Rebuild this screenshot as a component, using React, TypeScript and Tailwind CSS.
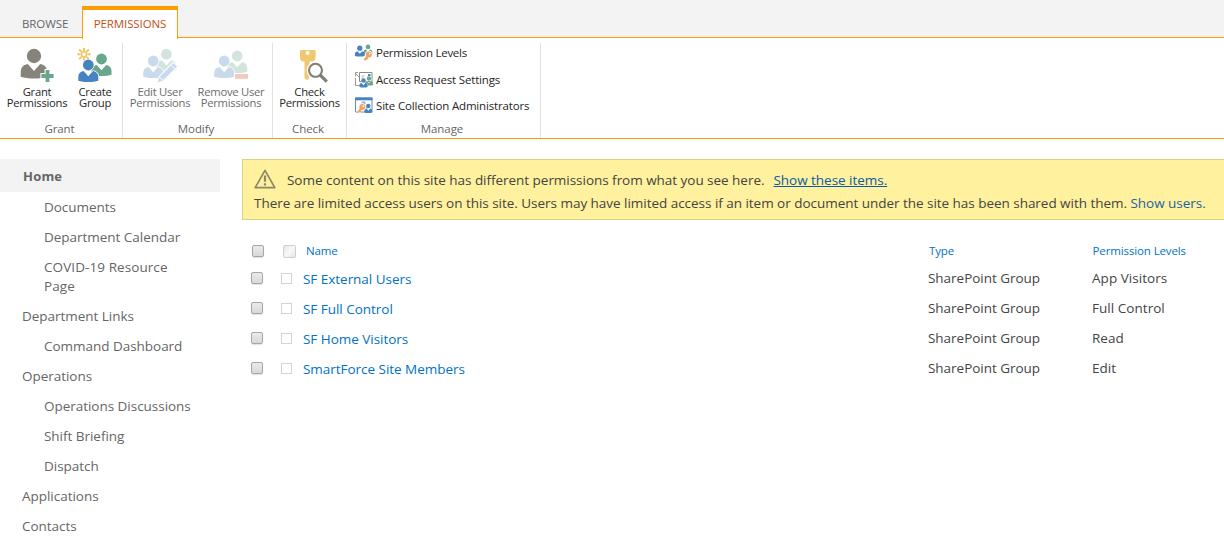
import React from "react";

const BLUE = "#4683c0";
const GREEN = "#6aa68b";
const GRAY = "#85837a";
const GOLD = "#f0c871";
const ORANGE = "#f0a35c";

/* Head-and-shoulders figure; cx/cy is the centre of the head, k its scale. */
function Person({ cx, cy, k = 1, fill, halo = false }: { cx: number; cy: number; k?: number; fill: string; halo?: boolean }) {
  return (
    <g transform={`translate(${cx} ${cy}) scale(${k})`} fill={fill} stroke={halo ? "#fff" : "none"} strokeWidth={halo ? 1.6 : 0} style={{ paintOrder: "stroke" }}>
      <circle r="5.5" />
      <path d="M-4.8 6.2 L0 11.6 L4.8 6.2 C8.6 7 10 9 10.2 12 L10.2 16 C5 17.8 -5 17.8 -10.2 16 L-10.2 12 C-10 9 -8.6 7 -4.8 6.2Z" />
    </g>
  );
}

function Icon({ children }: { children: React.ReactNode }) {
  return (
    <svg width="32" height="32" viewBox="0 0 32 32" className="block overflow-visible">
      {children}
    </svg>
  );
}

const GrantIcon = () => (
  <Icon>
    <Person cx={13} cy={8} k={1.3} fill={GRAY} />
    <path d="M24.6 22h3.8v4.1h4.2v3.8h-4.2V34h-3.8v-4.1h-4.2v-3.8h4.2z" fill={GREEN} stroke="#fff" strokeWidth="2" style={{ paintOrder: "stroke" }} />
  </Icon>
);

const CreateIcon = () => (
  <Icon>
    <Person cx={22.5} cy={11} k={0.98} fill={GREEN} />
    <Person cx={9.3} cy={17} k={0.98} fill={BLUE} halo />
    <circle cx="5" cy="6.3" r="5.6" fill="#fff" />
    <g stroke="#efc462" strokeWidth="1.9">
      <circle cx="5" cy="6.3" r="2.6" fill="#fff" strokeWidth="1.5" />
      <path d="M5 0v3M5 9.6v3M-1.6 6.3h3M8.6 6.3h3M.2 1.5l2.3 2.3M7.5 8.8l2.3 2.3M.2 11.1l2.3-2.3M7.5 3.8l2.3-2.3" />
    </g>
  </Icon>
);

const EditIcon = () => (
  <Icon>
    <Person cx={22.4} cy={6.2} k={0.98} fill="#d2e4dc" />
    <Person cx={9.2} cy={13} k={0.98} fill="#c8daec" halo />
    <path d="M29.3 15l3.8 3.4L19 32.4l-5.6 2.2 2-5.5z" fill="#c8daec" stroke="#fff" strokeWidth="2" style={{ paintOrder: "stroke" }} />
    <path d="M27.3 17.2l3.8 3.4M15.4 29.1l3.6 3.3" stroke="#fff" strokeWidth=".9" />
  </Icon>
);

const RemoveIcon = () => (
  <Icon>
    <Person cx={22.2} cy={8} k={0.98} fill="#d2e4dc" />
    <Person cx={9.2} cy={13} k={0.98} fill="#c8daec" halo />
    <path d="M20 26h13v4.8H20z" fill="#f3c9bf" stroke="#fff" strokeWidth="2" style={{ paintOrder: "stroke" }} />
  </Icon>
);

const CheckIcon = () => (
  <Icon>
    <path fillRule="evenodd" d="M7.2 2h13.2q1.2 0 1.2 1.2V9q0 4.5-4.5 4.5h-1.6v4l-1 1 1 1v3l-1 1 1 1v5L13.3 32.6 10.5 30V13.5H9.8Q6 13.5 6 9.5V3.2Q6 2 7.2 2zM13.6 3a2 2 0 1 0 0 4a2 2 0 1 0 0-4z" fill={GOLD} />
    <circle cx="21.5" cy="22.3" r="7.3" fill="#fff" stroke="#fff" strokeWidth="3" />
    <circle cx="21.5" cy="22.3" r="6.5" fill="none" stroke="#817f77" strokeWidth="2.1" />
    <path d="M26.2 27l6.6 6.6" stroke="#817f77" strokeWidth="3.2" />
  </Icon>
);

const SmallIcon = ({ children }: { children: React.ReactNode }) => (
  <svg width="18" height="18" viewBox="0 0 18 18" className="block shrink-0 overflow-visible">
    {children}
  </svg>
);

const SmallKey = () => (
  <>
    <path d="M13.6 11L9.5 16" stroke="#fff" strokeWidth="4" />
    <circle cx="13.8" cy="10.4" r="3.7" fill="#fff" />
    <path d="M13.6 10.8L9.3 16.2M10.8 13.8l1.8 1.5" stroke={ORANGE} strokeWidth="2.1" />
    <circle cx="13.8" cy="10.4" r="3" fill={ORANGE} />
    <circle cx="14.7" cy="9.6" r=".9" fill="#fff" />
  </>
);

const LevelsIcon = () => (
  <SmallIcon>
    <Person cx={13} cy={2.9} k={0.43} fill={GREEN} />
    <Person cx={4.8} cy={4.2} k={0.48} fill={BLUE} />
    <SmallKey />
  </SmallIcon>
);

const RequestIcon = () => (
  <SmallIcon>
    <path d="M4.5 1.5h12.500v9H4.500z" fill="#fff" stroke="#8b8982" />
    <path d="M6.500 5h3M6.500 7h2" stroke="#b3b1aa" />
    <path d="M13 3h2.500v2H13z" fill={BLUE} />
    <path d="M3 1.500H.5v4M.5 7v7.500h5" fill="none" stroke="#9b9992" />
    <path d="M1 3l3 3" stroke="#9b9992" />
    <Person cx={14} cy={7.5} k={0.4} fill={GREEN} halo />
    <Person cx={8.500} cy={9.5} k={0.4} fill={BLUE} halo />
  </SmallIcon>
);

const AdminIcon = () => (
  <SmallIcon>
    <path d="M.5 1h16.500v14H.5z" fill="#fff" stroke="#5f8fc4" />
    <path d="M0 .5h17.500v2.800H0z" fill={BLUE} />
    <Person cx={8.500} cy={6.300} k={0.38} fill="#8fb4da" />
    <Person cx={13.300} cy={9} k={0.4} fill={BLUE} halo />
    <g transform="translate(-6.5 -.5)">
      <SmallKey />
    </g>
  </SmallIcon>
);

const WarningIcon = () => (
  <svg width="22" height="20" viewBox="0 0 22 20" className="block shrink-0">
    <path d="M11 1.300L20.800 18.600H1.200z" fill="none" stroke="#8c8868" strokeWidth="1.700" strokeLinejoin="round" />
    <path d="M11 6.500v6.200M11 14.300v2.200" stroke="#8c8868" strokeWidth="2.200" />
  </svg>
);

function BigButton({ icon, lines, className, disabled = false }: { icon: React.ReactNode; lines: [string, string]; className: string; disabled?: boolean }) {
  return (
    <button className={`flex shrink-0 flex-col items-center pt-[5px] ${disabled ? "text-[#6b6c6e]" : "text-[#262626]"} ${className}`}>
      {icon}
      <span className="mt-[6px] block text-center text-[11.25px] leading-[11px] tracking-[-0.26px] whitespace-nowrap">
        {lines[0]}
        <br />
        {lines[1]}
      </span>
    </button>
  );
}

function RibbonGroup({ label, className, children }: { label: string; className: string; children: React.ReactNode }) {
  return (
    <section className={`flex h-[95px] shrink-0 flex-col border-r border-[#e1e1e1] ${className}`}>
      <div className="flex h-[78px]">{children}</div>
      <div className="text-center text-[11.5px] leading-[16px] tracking-[-0.08px] text-[#666666]">{label}</div>
    </section>
  );
}

const manageLinks = [
  { icon: <LevelsIcon />, label: "Permission Levels", spacing: "tracking-[-0.27px]" },
  { icon: <RequestIcon />, label: "Access Request Settings", spacing: "tracking-[-0.17px]" },
  { icon: <AdminIcon />, label: "Site Collection Administrators", spacing: "tracking-[-0.17px]" },
];

const nav = [
  { label: "Documents", sub: true },
  { label: "Department Calendar", sub: true },
  { label: "COVID-19 Resource Page", sub: true },
  { label: "Department Links", sub: false },
  { label: "Command Dashboard", sub: true },
  { label: "Operations", sub: false },
  { label: "Operations Discussions", sub: true },
  { label: "Shift Briefing", sub: true },
  { label: "Dispatch", sub: true },
  { label: "Applications", sub: false },
  { label: "Contacts", sub: false },
];

const rows = [
  ["SF External Users", "SharePoint Group", "App Visitors"],
  ["SF Full Control", "SharePoint Group", "Full Control"],
  ["SF Home Visitors", "SharePoint Group", "Read"],
  ["SmartForce Site Members", "SharePoint Group", "Edit"],
];

function Checkbox({ className = "" }: { className?: string }) {
  return <span className={`block h-3 w-3 rounded-[2px] border border-[#a6a6a6] bg-gradient-to-b from-[#eaeaea] to-[#d9d9d9] shadow-[0_1px_1px_rgba(0,0,0,0.12)] ${className}`} />;
}

export default function App() {
  return (
    <div className="h-[546px] w-[1224px] overflow-hidden bg-white font-['Open_Sans','Noto_Sans',sans-serif]">
      <header className="flex h-[38px] border-b border-[#ff9d00] bg-[#f3f3f3] text-[11.5px] tracking-[-0.1px]">
        <div className="flex w-[82px] items-end pl-[22px] text-[#666666]">
          <span className="mb-[4px] leading-[18px]">BROWSE</span>
        </div>
        <div className="mt-[6px] -mb-px flex h-[33px] w-[96px] items-end justify-center border-x border-t-4 border-x-[#ff9d00] border-t-[#ff9d00] bg-white text-[#c04f17]">
          <span className="mb-[6px] leading-[18px]">PERMISSIONS</span>
        </div>
      </header>

      <div className="flex h-[101px] border-b border-[#ff9d00] pt-[5px]">
        <RibbonGroup label="Grant" className="w-[123px] pr-[3px]">
          <BigButton icon={<GrantIcon />} lines={["Grant", "Permissions"]} className="ml-[3px] w-[68px]" />
          <BigButton icon={<CreateIcon />} lines={["Create", "Group"]} className="ml-[3px] w-[42px]" />
        </RibbonGroup>
        <RibbonGroup label="Modify" className="w-[150px] pr-[3px]">
          <BigButton icon={<EditIcon />} lines={["Edit User", "Permissions"]} className="ml-[3px] w-[68px]" disabled />
          <BigButton icon={<RemoveIcon />} lines={["Remove User", "Permissions"]} className="w-[74px]" disabled />
        </RibbonGroup>
        <RibbonGroup label="Check" className="w-[74px] pr-[3px]">
          <BigButton icon={<CheckIcon />} lines={["Check", "Permissions"]} className="ml-[2px] w-[69px]" />
        </RibbonGroup>
        <RibbonGroup label="Manage" className="w-[194px] pr-[3px]">
          <ul className="ml-2 text-[11.5px] text-[#262626]">
            {manageLinks.map(({ icon, label, spacing }) => (
              <li key={label} className="flex h-[26.5px] items-start gap-[3px] pt-px">
                {icon}
                <span className={`leading-[18px] whitespace-nowrap ${spacing}`}>{label}</span>
              </li>
            ))}
          </ul>
        </RibbonGroup>
      </div>

      <div className="flex pt-5 text-[13.5px] tracking-[-0.03px]">
        <nav className="w-[242px] shrink-0 text-[#666666]">
          <div className="flex h-[33px] w-[220px] items-center bg-[#f3f3f3] pt-[3px] pl-[23px] text-[13px] font-bold tracking-[0.2px]">Home</div>
          {nav.map(({ label, sub }) => (
            <a key={label} className={`block w-[190px] py-[5.5px] leading-[19px] ${sub ? "pl-[44px]" : "pl-[22px]"} ${label.startsWith("COVID") ? "pr-[15px] tracking-[0.08px]" : "whitespace-nowrap"}`}>
              {label}
            </a>
          ))}
        </nav>

        <main className="w-[982px] shrink-0 text-[#444444]">
          <div className="h-[61px] border-y border-l border-[#d6d283] bg-[#fff19d] pt-[9px] pl-[11px] whitespace-nowrap">
            <div className="flex h-[22px] items-center">
              <div className="mb-[3px]">
                <WarningIcon />
              </div>
              <span className="ml-[11px] pt-px">Some content on this site has different permissions from what you see here.</span>
              <a className="ml-[9px] pt-px text-[#0a5ba8] underline">Show these items.</a>
            </div>
            <div className="leading-[24px]">
              There are limited access users on this site. Users may have limited access if an item or document under the site has been shared with them. <a className="text-[#2262a5]">Show users.</a>
            </div>
          </div>

          <div className="mt-[20px]">
            <div className="grid h-[23px] grid-cols-[41px_22px_623px_163px_1fr] items-center text-[11.5px] tracking-[-0.12px] text-[#0072c6]">
              <Checkbox className="mb-px ml-[10px]" />
              <span className="block h-[13px] w-[13px] rounded-[2px] border border-[#cfcfcf] bg-gradient-to-br from-[#e6e6e6] via-[#f8f8f8] to-[#e4e4e4]" />
              <span className="pb-[2px] pl-px">Name</span>
              <span className="pb-[2px] pl-px">Type</span>
              <span className="pb-[2px] pl-[1.5px]">Permission Levels</span>
            </div>
            {rows.map(([name, type, level]) => (
              <div key={name} className="grid h-[30px] grid-cols-[39px_22px_625px_163px_1fr] items-center">
                <Checkbox className="ml-[9px]" />
                <span className="mt-px block h-[11px] w-[11px] border border-[#d4d4d4]" />
                <a className="pt-[2px] text-[#0072c6]">{name}</a>
                <span>{type}</span>
                <span className="pl-px tracking-[0.04px]">{level}</span>
              </div>
            ))}
          </div>
        </main>
      </div>
    </div>
  );
}
